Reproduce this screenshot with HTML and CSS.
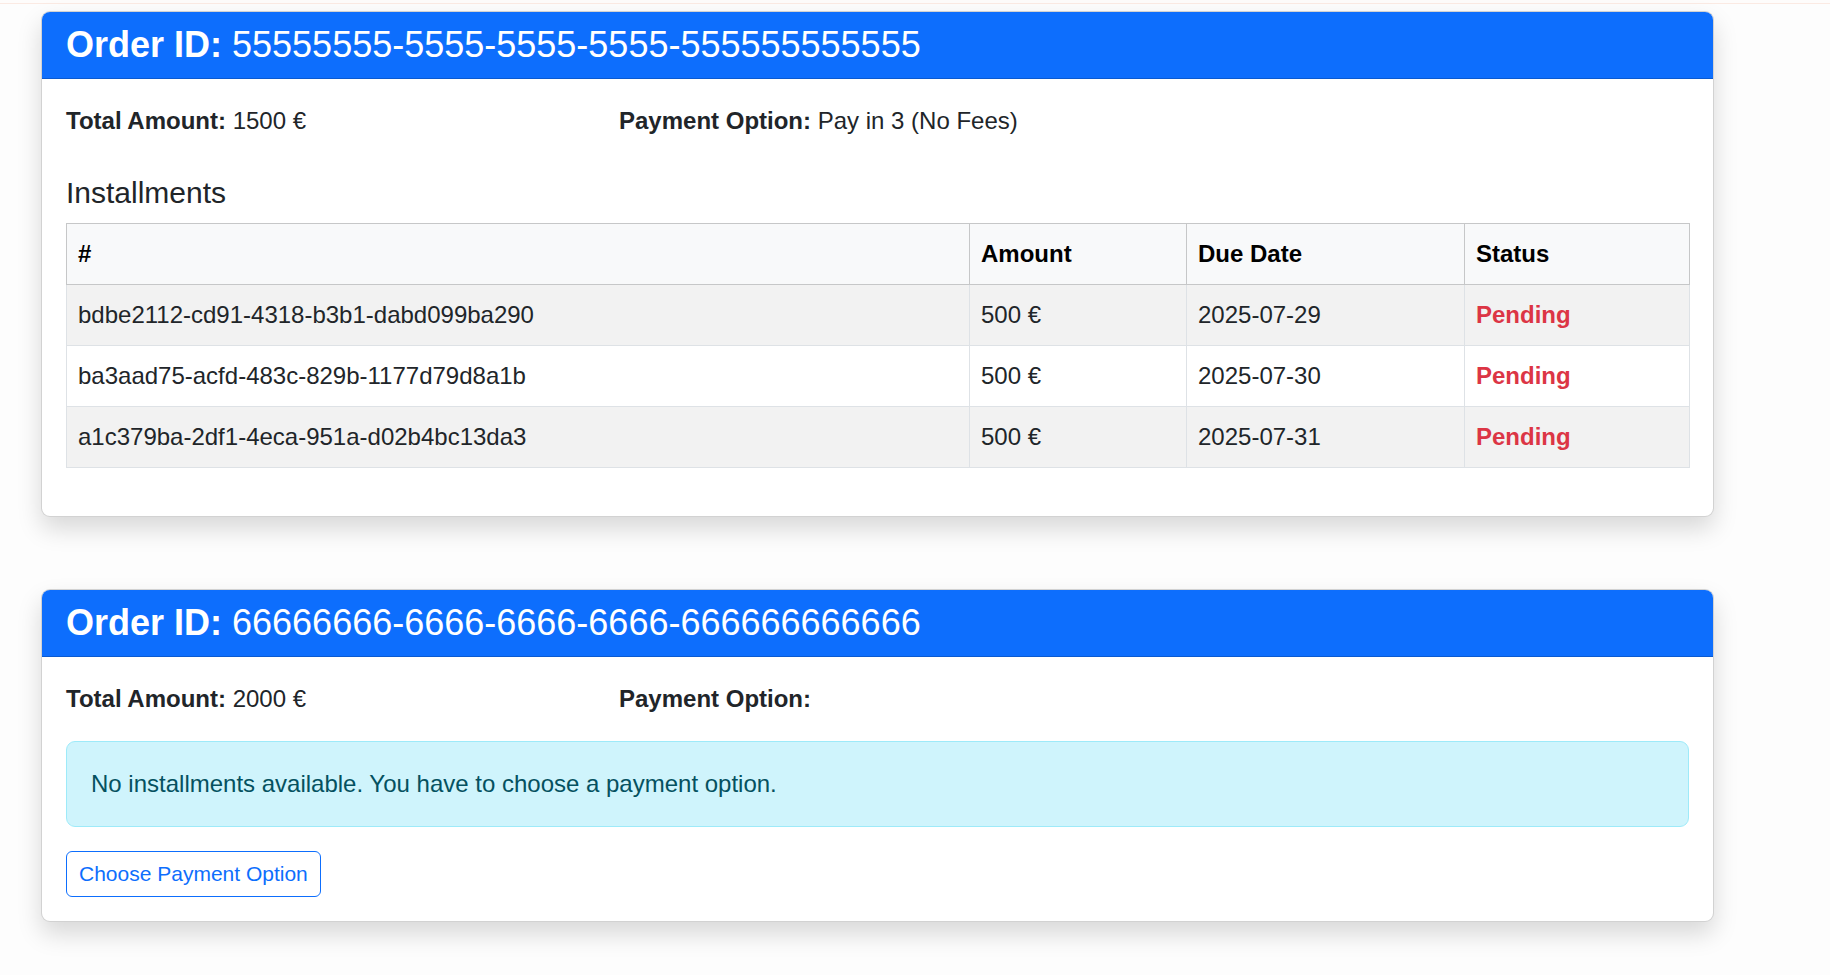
FILE: index.html
```html
<!DOCTYPE html>
<html lang="en">
<head>
<meta charset="utf-8">
<title>Orders</title>
<link rel="stylesheet" href="styles.css">
</head>
<body>
<div class="topbar"></div>
<main class="orders">
  <section class="card">
    <header class="card-header">
      <h4 class="card-title"><strong>Order ID:</strong> 55555555-5555-5555-5555-555555555555</h4>
    </header>
    <div class="card-body">
      <div class="summary">
        <p class="field"><strong>Total Amount:</strong> 1500 €</p>
        <p class="field"><strong>Payment Option:</strong> Pay in 3 (No Fees)</p>
      </div>
      <h5 class="section-title">Installments</h5>
      <table class="table">
        <colgroup>
          <col class="col-id">
          <col class="col-amount">
          <col class="col-date">
          <col class="col-status">
        </colgroup>
        <thead>
          <tr><th>#</th><th>Amount</th><th>Due Date</th><th>Status</th></tr>
        </thead>
        <tbody>
          <tr class="striped"><td>bdbe2112-cd91-4318-b3b1-dabd099ba290</td><td>500 €</td><td>2025-07-29</td><td class="status-pending">Pending</td></tr>
          <tr><td>ba3aad75-acfd-483c-829b-1177d79d8a1b</td><td>500 €</td><td>2025-07-30</td><td class="status-pending">Pending</td></tr>
          <tr class="striped"><td>a1c379ba-2df1-4eca-951a-d02b4bc13da3</td><td>500 €</td><td>2025-07-31</td><td class="status-pending">Pending</td></tr>
        </tbody>
      </table>
    </div>
  </section>

  <section class="card">
    <header class="card-header">
      <h4 class="card-title"><strong>Order ID:</strong> 66666666-6666-6666-6666-666666666666</h4>
    </header>
    <div class="card-body">
      <div class="summary">
        <p class="field"><strong>Total Amount:</strong> 2000 €</p>
        <p class="field"><strong>Payment Option:</strong> </p>
      </div>
      <div class="alert-info">No installments available. You have to choose a payment option.</div>
      <button class="btn-outline" type="button">Choose Payment Option</button>
    </div>
  </section>
</main>
</body>
</html>
```

FILE: styles.css
```css
html, body {
  margin: 0;
  padding: 0;
}

body {
  background: #fdfdfd;
  font-family: "Liberation Sans", Arial, Helvetica, sans-serif;
  font-size: 24px;
  line-height: 36px;
  color: #212529;
}

.topbar {
  height: 3px;
  background: #fefcfb;
  border-bottom: 1px solid #fbeae3;
}

.orders {
  padding: 7px 0 40px 41px;
}

.card {
  width: 1673px;
  box-sizing: border-box;
  background: #fff;
  border: 1px solid rgba(0, 0, 0, 0.175);
  border-radius: 9px;
  box-shadow: 0 12px 24px rgba(0, 0, 0, 0.15);
  overflow: hidden;
  margin-bottom: 72px;
}

.card-header {
  background: #0d6efd;
  color: #fff;
  padding: 12px 24px;
  border-bottom: 1px solid rgba(0, 0, 0, 0.175);
}

.card-title {
  margin: 0;
  font-size: 36px;
  line-height: 42px;
  font-weight: 400;
}

.card-title strong {
  font-weight: 700;
}

.card-body {
  padding: 24px;
}

.summary {
  display: grid;
  grid-template-columns: repeat(3, 1fr);
  column-gap: 36px;
  margin-bottom: 24px;
}

.field {
  margin: 0;
}

.field strong {
  font-weight: 700;
}

.section-title {
  margin: 36px 0 12px;
  font-size: 30px;
  line-height: 36px;
  font-weight: 400;
  color: #212529;
}

.table {
  width: 100%;
  border-collapse: collapse;
  table-layout: fixed;
  margin-bottom: 24px;
}

.col-id { width: 903px; }
.col-amount { width: 217px; }
.col-date { width: 278px; }
.col-status { width: 225px; }

.table th,
.table td {
  text-align: left;
  padding: 12px 12px 12px 11px;
  line-height: 36px;
  vertical-align: top;
}

.table th {
  background: #f8f9fa;
  color: #000;
  font-weight: 700;
  border: 1px solid #c6c7c8;
}

.table td {
  border: 1px solid #dee2e6;
  color: #212529;
  background: #fff;
}

.table tr.striped td {
  background: #f2f2f2;
}

.table td.status-pending {
  color: #dc3545;
  font-weight: 700;
}

.alert-info {
  background: #cff4fc;
  border: 1px solid #9eeaf9;
  color: #055160;
  border-radius: 9px;
  padding: 24px;
  margin-bottom: 24px;
}

.btn-outline {
  display: block;
  font-family: inherit;
  font-size: 21px;
  line-height: 31.5px;
  padding: 6px 12px;
  color: #0d6efd;
  background: transparent;
  border: 1px solid #0d6efd;
  border-radius: 6px;
  cursor: pointer;
}
```
